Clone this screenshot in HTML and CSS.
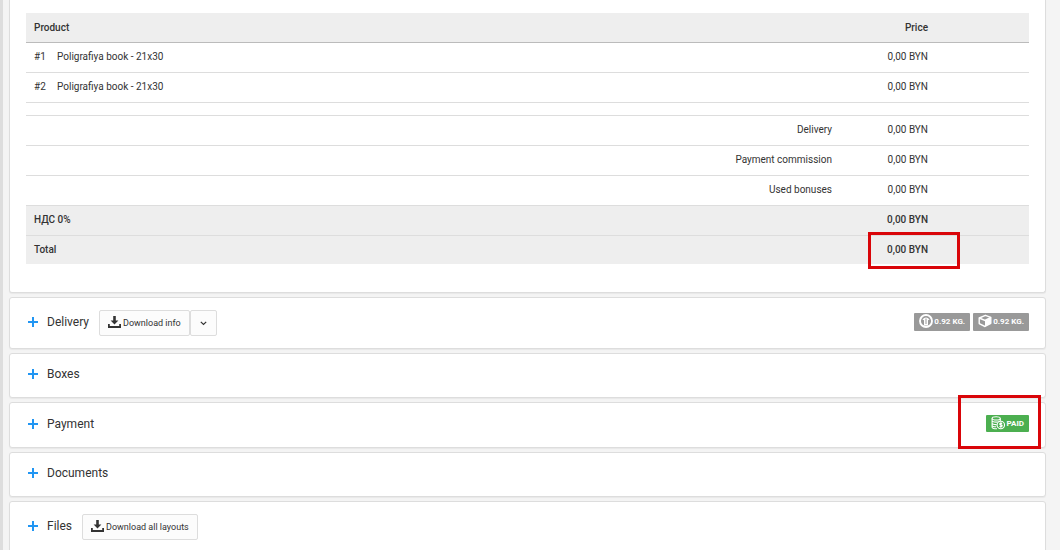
FILE: index.html
```
<!DOCTYPE html>
<html lang="en">
<head>
    <meta charset="UTF-8">
    <meta name="viewport" content="width=device-width, initial-scale=1.0">
    <title>Order</title>
    <link rel="stylesheet" href="styles.css">
</head>
<body>
    <svg class="sprite" aria-hidden="true">
        <symbol id="icon-plus" viewBox="0 0 10 10">
            <path d="M5 0v10M0 5h10" stroke="currentColor" stroke-width="2" fill="none"/>
        </symbol>
        <symbol id="icon-download" viewBox="0 0 13 12">
            <path d="M5.2 0h2.6v4.5h2.6L6.5 8.4 2.6 4.5h2.6z" fill="currentColor"/>
            <path d="M.9 8v3h11.2V8" stroke="currentColor" stroke-width="1.8" fill="none"/>
        </symbol>
        <symbol id="icon-chevron" viewBox="0 0 7 5">
            <path d="M.8.8l2.7 2.7L6.2.8" stroke="currentColor" stroke-width="1.2" fill="none"/>
        </symbol>
        <symbol id="icon-weight" viewBox="0 0 14 14">
            <circle cx="7" cy="7" r="6" stroke="currentColor" stroke-width="1.9" fill="none"/>
            <path d="M3.4 5.4Q7 1.6 10.6 5.4L9 6.2V11.4H5V6.2z" fill="currentColor"/>
            <path d="M7 4.5V10" stroke="#999" stroke-width="1"/>
        </symbol>
        <symbol id="icon-box" viewBox="0 0 14 14">
            <path d="M1.2 4L7.4 1.3l5.4 2v6L7 12.5 1.2 9.6z" stroke="currentColor" stroke-width="1.4" stroke-linejoin="round" fill="none"/>
            <path d="M1.2 4L7 6.4l5.8-3.1" stroke="currentColor" stroke-width="1.4" fill="none"/>
            <path d="M7 6.4l5.8-3.1v6L7 12.5z" fill="currentColor"/>
        </symbol>
        <symbol id="icon-coins" viewBox="0 0 14 14">
            <g stroke="currentColor" stroke-width="1.1" fill="none">
                <ellipse cx="5.2" cy="2.4" rx="4.1" ry="1.6"/>
                <path d="M1.1 2.4v2.2c0 2 8.2 2 8.2 0V2.4M1.1 4.8V7c0 1.2 2.3 1.7 4.6 1.6M1.1 7v2.3c0 1 2 1.5 4 1.5M1.1 9.3v2c0 1 2.4 1.6 4.9 1.4"/>
                <circle cx="9.8" cy="9" r="3.7" fill="#4caf50"/>
                <path d="M11.2 7.5c-1-.8-2.5-.5-2.5.4 0 1.2 2.5.7 2.5 1.9 0 1-1.7 1.1-2.7.4M9.9 6.3v5.4"/>
            </g>
        </symbol>
    </svg>

    <main class="order">
        <section class="panel panel-products">
            <table class="products">
                <thead>
                    <tr>
                        <th class="col-name" colspan="2">Product</th>
                        <th class="col-label"></th>
                        <th class="col-price">Price</th>
                        <th class="col-end"></th>
                    </tr>
                </thead>
                <tbody>
                    <tr>
                        <td class="col-num">#1</td>
                        <td class="col-title">Poligrafiya book - 21x30</td>
                        <td></td>
                        <td class="col-price">0,00 BYN</td>
                        <td></td>
                    </tr>
                    <tr>
                        <td class="col-num">#2</td>
                        <td class="col-title">Poligrafiya book - 21x30</td>
                        <td></td>
                        <td class="col-price">0,00 BYN</td>
                        <td></td>
                    </tr>
                    <tr class="spacer">
                        <td colspan="5"></td>
                    </tr>
                    <tr>
                        <td class="col-label" colspan="3">Delivery</td>
                        <td class="col-price">0,00 BYN</td>
                        <td></td>
                    </tr>
                    <tr>
                        <td class="col-label" colspan="3">Payment commission</td>
                        <td class="col-price">0,00 BYN</td>
                        <td></td>
                    </tr>
                    <tr>
                        <td class="col-label" colspan="3">Used bonuses</td>
                        <td class="col-price">0,00 BYN</td>
                        <td></td>
                    </tr>
                </tbody>
                <tfoot>
                    <tr>
                        <th colspan="3">НДС 0%</th>
                        <th class="col-price">0,00 BYN</th>
                        <th></th>
                    </tr>
                    <tr>
                        <th colspan="3">Total</th>
                        <th class="col-price total-price">0,00 BYN<span class="mark mark-total"></span></th>
                        <th></th>
                    </tr>
                </tfoot>
            </table>
        </section>

        <section class="panel">
            <svg class="plus"><use href="#icon-plus"/></svg>
            <h2>Delivery</h2>
            <div class="btn-group">
                <button type="button" class="btn"><svg class="icon-download"><use href="#icon-download"/></svg>Download info</button>
                <button type="button" class="btn btn-toggle" aria-label="More"><svg class="icon-chevron"><use href="#icon-chevron"/></svg></button>
            </div>
            <div class="labels">
                <span class="label"><svg class="icon-label"><use href="#icon-weight"/></svg>0.92 KG.</span>
                <span class="label"><svg class="icon-label"><use href="#icon-box"/></svg>0.92 KG.</span>
            </div>
        </section>

        <section class="panel">
            <svg class="plus"><use href="#icon-plus"/></svg>
            <h2>Boxes</h2>
        </section>

        <section class="panel">
            <svg class="plus"><use href="#icon-plus"/></svg>
            <h2>Payment</h2>
            <div class="labels">
                <span class="label label-success"><svg class="icon-label"><use href="#icon-coins"/></svg>PAID</span>
            </div>
            <span class="mark mark-paid"></span>
        </section>

        <section class="panel">
            <svg class="plus"><use href="#icon-plus"/></svg>
            <h2>Documents</h2>
        </section>

        <section class="panel">
            <svg class="plus"><use href="#icon-plus"/></svg>
            <h2>Files</h2>
            <button type="button" class="btn"><svg class="icon-download"><use href="#icon-download"/></svg>Download all layouts</button>
        </section>
    </main>
</body>
</html>
```
FILE: styles.css
```
* {
    box-sizing: border-box;
}

html {
    overflow: hidden;
}

body {
    margin: 0;
    min-height: 100vh;
    border-left: 3px solid #ddd;
    background-color: #f4f4f4;
    color: #333;
    font-family: Roboto, "Liberation Sans", sans-serif;
    font-size: 10px;
    line-height: 15px;
}

.sprite {
    position: absolute;
    width: 0;
    height: 0;
}

.order {
    display: flex;
    flex-direction: column;
    gap: 4px;
    padding: 0 14px 0 6px;
}

.panel {
    position: relative;
    display: flex;
    align-items: center;
    padding: 12px 16px;
    border: 1px solid #ddd;
    border-radius: 3px;
    background-color: #fff;
    box-shadow: 0 1px 1px rgba(0, 0, 0, 0.05);
}

.panel-products {
    padding: 13px 16px 28px;
    border-top: none;
    border-radius: 0 0 3px 3px;
}

.panel h2 {
    margin: 0 10px 2px 9px;
    font-size: 12px;
    font-weight: 400;
    line-height: 17px;
}

/* products table */
.products {
    width: 100%;
    border-spacing: 0;
}

.products th,
.products td {
    padding: 6px 8px 8px;
    border-bottom: 1px solid #ddd;
    text-align: left;
    font-weight: 400;
}

.products th {
    background-color: #eee;
    font-weight: 500;
}

.products thead th {
    padding: 7px 8px;
    border-bottom-color: #bbb;
}

.products tfoot tr:last-child th {
    padding-bottom: 7px;
    border-bottom: none;
}

.products .col-num {
    width: 23px;
    padding-right: 0;
}

.products .col-label,
.products .col-price {
    text-align: right;
}

.products .col-price {
    width: 96px;
}

.products .col-end {
    width: 93px;
}

.products .spacer td {
    padding: 6px 0;
}

.total-price {
    position: relative;
}

/* buttons */
.btn-group {
    display: flex;
}

.btn {
    display: flex;
    align-items: center;
    gap: 2px;
    height: 26px;
    padding: 0 8px;
    border: 1px solid #ddd;
    border-radius: 2px;
    background-color: #fcfcfc;
    color: #333;
    font-family: inherit;
    font-size: 9px;
    cursor: pointer;
}

.btn-toggle {
    padding: 0 9px;
}

.plus {
    width: 10px;
    height: 10px;
    margin: 0 0 3px 2px;
    color: #2196f3;
}

.icon-download {
    width: 13px;
    height: 12px;
    margin-bottom: 2px;
}

.icon-chevron {
    width: 7px;
    height: 5px;
}

/* labels */
.labels {
    display: flex;
    gap: 3px;
    margin: 0 0 3px auto;
}

.label {
    display: flex;
    align-items: center;
    gap: 1px;
    height: 18px;
    padding: 0 5px;
    border-radius: 1px;
    background-color: #999;
    color: #fff;
    font-size: 8px;
    font-weight: 700;
}

.label-success {
    gap: 2px;
    height: 17px;
    background-color: #4caf50;
}

.icon-label {
    width: 14px;
    height: 14px;
    margin-bottom: 2px;
}

/* highlight frames */
.mark {
    position: absolute;
    border: 3px solid #d90509;
    pointer-events: none;
}

.mark-total {
    top: -4px;
    right: -24px;
    width: 92px;
    height: 37px;
}

.mark-paid {
    top: -8px;
    right: 4px;
    width: 83px;
    height: 54px;
}
```
